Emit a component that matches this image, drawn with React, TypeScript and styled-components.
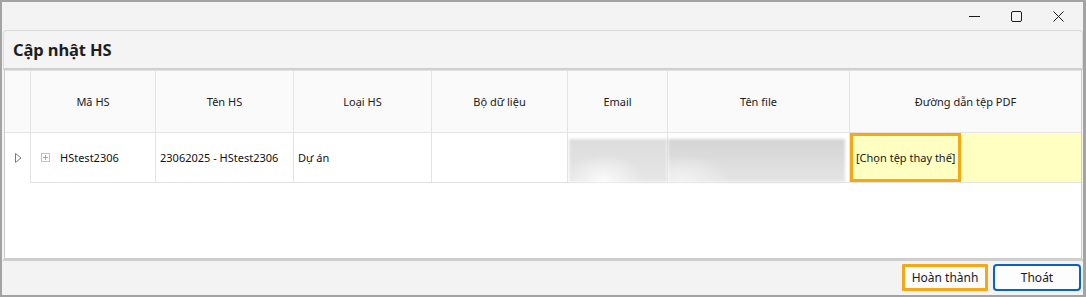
import React from "react";
import styled, { createGlobalStyle } from "styled-components";

const Global = createGlobalStyle`
  html, body { margin: 0; padding: 0; background: #ffffff; }
  body { font-family: "Noto Sans", "Open Sans", sans-serif; }
  * { box-sizing: border-box; }
`;

const Window = styled.div`
  width: 1086px;
  height: 297px;
  background: #f3f3f3;
  border-style: solid;
  border-color: #a3a3a3;
  border-width: 2px 3px 2px 2px;
  display: flex;
  flex-direction: column;
  overflow: hidden;
`;

const TitleBar = styled.div`
  height: 28px;
  display: flex;
  justify-content: flex-end;
  align-items: center;
  padding-right: 4px;
  flex-shrink: 0;
`;

const CaptionButton = styled.div`
  width: 42px;
  height: 28px;
  display: flex;
  align-items: center;
  justify-content: center;
  color: #1b1b1b;
`;

const Body = styled.div`
  flex: 1;
  display: flex;
  flex-direction: column;
  padding: 0 0 0 1px;
`;

const HeaderPanel = styled.div`
  height: 40px;
  border: 1px solid #dadada;
  border-bottom: 2px solid #cfcfcf;
  border-radius: 4px 4px 0 0;
  background: #f4f4f4;
  display: flex;
  align-items: center;
  padding-left: 9px;
  flex-shrink: 0;
`;

const Heading = styled.h1`
  margin: 0;
  font-size: 16.5px;
  font-weight: 700;
  color: #1e1e1e;
  letter-spacing: -0.1px;
`;

const GridFrame = styled.div`
  margin: 0 1px 0 1px;
  height: 189px;
  border: 1px solid #cbcbcb;
  border-top: none;
  background: #ffffff;
  flex-shrink: 0;
`;

const cols = "26px 125px 138px 138px 136px 100px 182px 1fr";

const HeaderRow = styled.div`
  display: grid;
  grid-template-columns: ${cols};
  height: 63px;
  background: #fafafa;
  border-top: 1px solid #e3e3e3;
  border-bottom: 1px solid #e3e3e3;
`;

const HeadCell = styled.div`
  display: flex;
  align-items: center;
  justify-content: center;
  font-size: 11px;
  color: #202020;
  border-right: 1px solid #e3e3e3;
  &:last-child { border-right: none; }
`;

const DataRow = styled.div`
  display: grid;
  grid-template-columns: ${cols};
  height: 50px;
`;

const Cell = styled.div<{ $bg?: string; $plain?: boolean }>`
  display: flex;
  align-items: center;
  font-size: 11px;
  color: #111;
  padding-left: 4px;
  background: ${(p) => p.$bg || "transparent"};
  border-right: 1px solid #e3e3e3;
  border-bottom: ${(p) => (p.$plain ? "none" : "1px solid #e3e3e3")};
  position: relative;
  &:last-child { border-right: none; }
`;

const Indicator = styled(Cell)`
  padding-left: 10px;
  color: #777;
`;

const Expand = styled.span`
  width: 9px;
  height: 9px;
  border: 1px solid #c4c4c4;
  margin: 0 10px 0 6px;
  display: inline-flex;
  align-items: center;
  justify-content: center;
  position: relative;
  &::before, &::after {
    content: "";
    position: absolute;
    background: #a8a8a8;
  }
  &::before { width: 5px; height: 1px; }
  &::after { width: 1px; height: 5px; }
`;

const Redacted = styled.div<{ $variant: "a" | "b" }>`
  position: absolute;
  left: ${(p) => (p.$variant === "a" ? "1px" : "0")};
  right: ${(p) => (p.$variant === "a" ? "0" : "4px")};
  top: 6px;
  bottom: 0;
  background: ${(p) =>
    p.$variant === "a"
      ? "radial-gradient(ellipse 40px 25px at 35% 95%, #fafafa, rgba(250,250,250,0) 100%), linear-gradient(180deg, #dcdcdc 0%, #e6e6e6 100%)"
      : "radial-gradient(ellipse 50px 25px at 8% 95%, #f2f2f2, rgba(242,242,242,0) 100%), linear-gradient(180deg, #d4d4d4 0%, #dedede 60%, #e4e4e4 100%)"};
  filter: blur(1.5px);
`;

const PickBox = styled.div`
  width: 111px;
  height: 49px;
  margin-left: -4px;
  border: 3px solid #f5a816;
  display: flex;
  align-items: center;
  padding-left: 3px;
  font-size: 11px;
  color: #1a1a1a;
  white-space: nowrap;
`;

const Footer = styled.div`
  flex: 1;
  border-top: 2px solid #cfcfcf;
  display: flex;
  justify-content: flex-end;
  align-items: center;
  gap: 5px;
  padding: 0 2px 2px 0;
`;

const Button = styled.button<{ $tone: "orange" | "blue" }>`
  height: 27px;
  font-family: inherit;
  font-size: 12px;
  color: #1a1a1a;
  background: #fdfdfd;
  cursor: pointer;
  ${(p) =>
    p.$tone === "orange"
      ? `width: 86px; border: 3px solid #f5a816; border-radius: 1px;`
      : `width: 88px; border: 2px solid #0a64bf; border-radius: 4px;`}
`;

export default function App() {
  return (
    <>
      <Global />
      <Window>
        <TitleBar>
          <CaptionButton>
            <svg width="11" height="11" viewBox="0 0 11 11">
              <line x1="0" y1="5.5" x2="11" y2="5.5" stroke="#1b1b1b" strokeWidth="1" />
            </svg>
          </CaptionButton>
          <CaptionButton>
            <svg width="11" height="11" viewBox="0 0 11 11">
              <rect x="0.5" y="0.5" width="10" height="10" rx="1.5" fill="none" stroke="#1b1b1b" strokeWidth="1" />
            </svg>
          </CaptionButton>
          <CaptionButton>
            <svg width="11" height="11" viewBox="0 0 11 11">
              <path d="M0.5 0.5 L10.5 10.5 M10.5 0.5 L0.5 10.5" stroke="#1b1b1b" strokeWidth="1" />
            </svg>
          </CaptionButton>
        </TitleBar>
        <Body>
          <HeaderPanel>
            <Heading>Cập nhật HS</Heading>
          </HeaderPanel>
          <GridFrame>
            <HeaderRow>
              <HeadCell />
              <HeadCell>Mã HS</HeadCell>
              <HeadCell>Tên HS</HeadCell>
              <HeadCell>Loại HS</HeadCell>
              <HeadCell>Bộ dữ liệu</HeadCell>
              <HeadCell>Email</HeadCell>
              <HeadCell>Tên file</HeadCell>
              <HeadCell>Đường dẫn tệp PDF</HeadCell>
            </HeaderRow>
            <DataRow>
              <Indicator $plain>
                <svg width="7" height="10" viewBox="0 0 7 10">
                  <path d="M0.5 0.5 L6 5 L0.5 9.5 Z" fill="none" stroke="#7a7a7a" strokeWidth="1" />
                </svg>
              </Indicator>
              <Cell>
                <Expand />
                HStest2306
              </Cell>
              <Cell>23062025 - HStest2306</Cell>
              <Cell>Dự án</Cell>
              <Cell />
              <Cell>
                <Redacted $variant="a" />
              </Cell>
              <Cell>
                <Redacted $variant="b" />
              </Cell>
              <Cell $bg="#ffffc1">
                <PickBox>[Chọn tệp thay thế]</PickBox>
              </Cell>
            </DataRow>
          </GridFrame>
          <Footer>
            <Button $tone="orange">Hoàn thành</Button>
            <Button $tone="blue">Thoát</Button>
          </Footer>
        </Body>
      </Window>
    </>
  );
}
